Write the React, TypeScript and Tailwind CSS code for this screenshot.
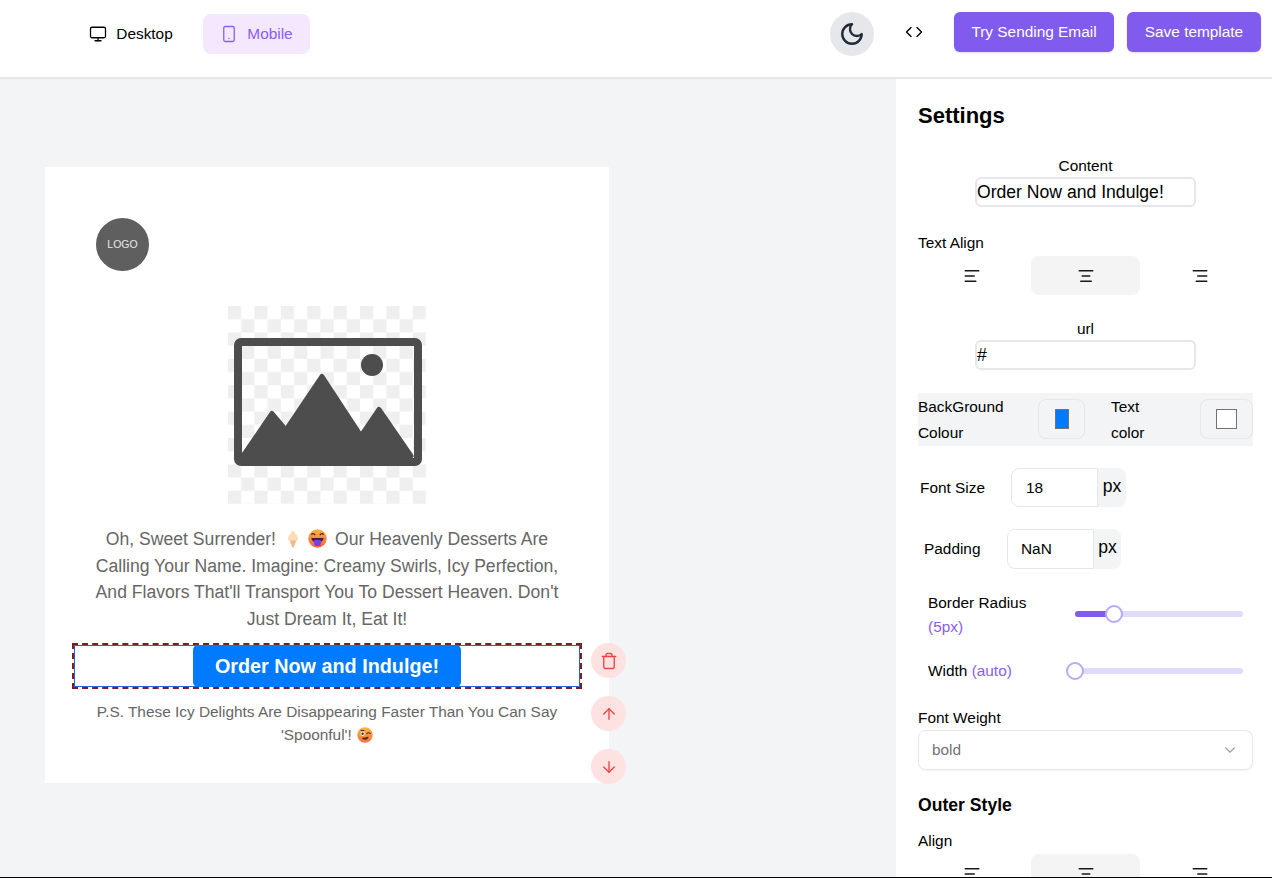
import {
  AlignCenter,
  AlignLeft,
  AlignRight,
  ArrowDown,
  ArrowUp,
  ChevronDown,
  Code,
  Monitor,
  Smartphone,
  Trash,
} from "lucide-react";

function IceCream() {
  return (
    <svg viewBox="0 0 12 18" className="ml-[11px] mr-[9px] inline-block h-[18px] w-[12px] align-[-3px]">
      <path d="M2 9 L10 9 L6.8 17.2 Q6 18 5.2 17.2 Z" fill="#f2b98c" />
      <path d="M6 0.5 Q8 2 8.5 4 Q10.5 5 10.8 7.5 Q12 9.5 10 10.5 L2 10.5 Q0 9.5 1.2 7.5 Q1.5 5 3.5 4 Q4 2 6 0.5 Z" fill="#fcdcb4" />
    </svg>
  );
}

function TongueFace() {
  return (
    <svg viewBox="0 0 20 20" className="mr-[8px] inline-block h-[19px] w-[19px] align-[-3px]">
      <defs>
        <linearGradient id="tongueFace" x1="0" y1="0" x2="0" y2="1">
          <stop offset="0" stopColor="#fbb23f" />
          <stop offset="1" stopColor="#f4624f" />
        </linearGradient>
      </defs>
      <circle cx="10" cy="10" r="9.7" fill="url(#tongueFace)" />
      <path d="M3.5 6 Q5.5 3.5 7.5 6.5 M12.5 6.5 Q14.5 3.5 16.5 6" fill="none" stroke="#4a2b1a" strokeWidth="1.3" />
      <path d="M3.5 9.5 H16.5 Q16 14 10 14.5 Q4 14 3.5 9.5 Z" fill="#43203a" />
      <path d="M6.5 11.5 H13.5 V15 Q13.5 18 10 18 Q6.5 18 6.5 15 Z" fill="#7a3fd6" />
    </svg>
  );
}

function WinkFace() {
  return (
    <svg viewBox="0 0 20 20" className="ml-[1px] inline-block h-[16px] w-[16px] align-[-3px]">
      <defs>
        <linearGradient id="winkFace" x1="0" y1="0" x2="0" y2="1">
          <stop offset="0" stopColor="#fcb83f" />
          <stop offset="1" stopColor="#f2704a" />
        </linearGradient>
      </defs>
      <circle cx="10" cy="10" r="9.7" fill="url(#winkFace)" />
      <circle cx="7" cy="8.5" r="2.6" fill="#fff" />
      <circle cx="7" cy="8.5" r="1.5" fill="#3b2a1e" />
      <path d="M12 8.5 Q14.5 6 17 8.5 M4.5 4 L9 4.5" fill="none" stroke="#4a2b1a" strokeWidth="1.3" />
      <path d="M6 13.5 Q10 13.5 14.5 12 Q13.5 16.5 9.5 16 Q7 15.8 6 13.5 Z" fill="#5b2a1e" />
    </svg>
  );
}

function ImagePlaceholder() {
  return (
    <svg viewBox="0 0 198 198" className="h-[198px] w-[198px]">
      <defs>
        <pattern id="checker" width="26.4" height="26.4" patternUnits="userSpaceOnUse">
          <rect width="13.2" height="13.2" fill="#efefef" />
          <rect x="13.2" y="13.2" width="13.2" height="13.2" fill="#efefef" />
        </pattern>
      </defs>
      <rect width="198" height="198" fill="url(#checker)" />
      <rect x="10" y="36" width="180" height="120" rx="3" fill="none" stroke="#4d4d4d" strokeWidth="8" />
      <circle cx="144" cy="59" r="11" fill="#4d4d4d" />
      <path
        d="M15 150 L44 107.5 L58 124 L94 70.5 L133 130 L151 103.5 L183 150 Z"
        fill="#4d4d4d"
        stroke="#4d4d4d"
        strokeWidth="5"
        strokeLinejoin="round"
      />
    </svg>
  );
}

function AlignTabs() {
  return (
    <div className="grid grid-cols-[107px_109px_107px] gap-[6px]">
      <div className="flex h-[39px] items-center justify-center">
        <AlignLeft size={18} strokeWidth={2} className="text-[#18181b]" />
      </div>
      <div className="flex h-[39px] items-center justify-center rounded-lg bg-[#f4f4f5]">
        <AlignCenter size={18} strokeWidth={2} className="text-[#18181b]" />
      </div>
      <div className="flex h-[39px] items-center justify-center">
        <AlignRight size={18} strokeWidth={2} className="text-[#18181b]" />
      </div>
    </div>
  );
}

function TextField({ label, value }: { label: string; value: string }) {
  return (
    <div className="flex flex-col items-center">
      <span className="mb-[1px] text-[15.4px] leading-[20px]">{label}</span>
      <input
        readOnly
        value={value}
        className="h-[30px] w-[221px] rounded-md border-2 border-[#e5e7eb] bg-white px-0 text-[17.6px] text-black outline-none"
      />
    </div>
  );
}

function NumberField({ label, value, labelClass, inputClass, addonClass }: { label: string; value: string; labelClass: string; inputClass: string; addonClass: string }) {
  return (
    <div className="flex items-center">
      <span className={labelClass}>{label}</span>
      <div className={inputClass}>{value}</div>
      <div className={addonClass}>px</div>
    </div>
  );
}

export default function App() {
  return (
    <div className="flex h-screen flex-col overflow-hidden border-b border-black bg-white font-['Liberation_Sans',Arial,sans-serif] text-black">
      <header className="flex h-[79px] shrink-0 items-start border-b-2 border-[#e5e7eb] bg-white">
        <div className="ml-[76px] mt-[14px] flex h-[40px] w-[110px] items-center justify-center gap-[9px] rounded-lg text-[15.4px]">
          <Monitor size={18} strokeWidth={1.7} />
          Desktop
        </div>
        <div className="ml-[17px] mt-[14px] flex h-[40px] w-[107px] items-center justify-center gap-[9px] rounded-lg bg-[#f3e8ff] text-[15.4px] text-[#8b5cf6]">
          <Smartphone size={18} strokeWidth={1.7} />
          Mobile
        </div>
        <div className="ml-[520px] mt-[12px] flex h-[44px] w-[44px] items-center justify-center rounded-full bg-[#e5e7eb]">
          <svg viewBox="0 0 24 24" className="h-[26px] w-[26px]" fill="none" stroke="#1f2937" strokeWidth="2.2" strokeLinecap="round" strokeLinejoin="round">
            <path d="M12 3a6 6 0 0 0 9 9 9 9 0 1 1-9-9Z" />
          </svg>
        </div>
        <div className="ml-[31px] mt-[23px]">
          <Code size={18} strokeWidth={1.8} />
        </div>
        <button className="ml-[31px] mt-[12px] h-[40px] w-[160px] rounded-md bg-[#805bee] text-[15.4px] text-white shadow-sm">
          Try Sending Email
        </button>
        <button className="ml-[13px] mt-[12px] h-[40px] w-[134px] rounded-md bg-[#805bee] text-[15.4px] text-white shadow-sm">
          Save template
        </button>
      </header>

      <div className="flex min-h-0 flex-1">
        <main className="w-[896px] shrink-0 bg-[#f3f4f6] pl-[45px] pt-[88px]">
          <div className="h-[616px] w-[564px] bg-white pt-[51px]">
            <div className="ml-[51px] flex h-[53px] w-[53px] items-center justify-center rounded-full bg-[#5f5f5f] text-[10.5px] text-[#e8e8e8]">
              LOGO
            </div>
            <div className="mt-[35px] flex justify-center">
              <ImagePlaceholder />
            </div>
            <p className="mx-auto mt-[22px] w-[480px] text-center text-[17.6px] leading-[26.6px] text-[#666666]">
              Oh, Sweet Surrender!
              <IceCream />
              <TongueFace />
              Our Heavenly Desserts Are Calling Your Name. Imagine: Creamy Swirls, Icy Perfection, And Flavors That'll
              Transport You To Dessert Heaven. Don't Just Dream It, Eat It!
            </p>
            <div className="relative ml-[27px] mt-[11px] w-[510px]">
              <div className="border-2 border-dashed border-[#7f1d1d]">
                <div className="flex h-[42px] justify-center ring-1 ring-inset ring-[#2563eb]">
                  <button className="w-[268px] rounded-[5px] bg-[#007bff] text-[19.8px] font-bold text-white">
                    Order Now and Indulge!
                  </button>
                </div>
              </div>
              <div className="absolute left-[519px] top-0 flex flex-col gap-[18px]">
                <div className="flex h-[35px] w-[35px] items-center justify-center rounded-full bg-[#fee2e2] text-[#ef4444]">
                  <Trash size={18} strokeWidth={1.8} />
                </div>
                <div className="flex h-[35px] w-[35px] items-center justify-center rounded-full bg-[#fee2e2] text-[#ef4444]">
                  <ArrowUp size={18} strokeWidth={1.8} />
                </div>
                <div className="flex h-[35px] w-[35px] items-center justify-center rounded-full bg-[#fee2e2] text-[#ef4444]">
                  <ArrowDown size={18} strokeWidth={1.8} />
                </div>
              </div>
            </div>
            <p className="mx-auto mt-[11px] w-[480px] text-center text-[15.4px] leading-[23.1px] text-[#666666]">
              P.S. These Icy Delights Are Disappearing Faster Than You Can Say 'Spoonful'! <WinkFace />
            </p>
          </div>
        </main>

        <aside className="w-[376px] overflow-hidden bg-white pl-[22px] pr-[19px] pt-[23px]">
          <h2 className="text-[22px] font-bold leading-[28px]">Settings</h2>

          <div className="mt-[26px]">
            <TextField label="Content" value="Order Now and Indulge!" />
          </div>

          <div className="mt-[25px] text-[15.4px] leading-[22px]">Text Align</div>
          <div className="mt-[2px]">
            <AlignTabs />
          </div>

          <div className="mt-[24px]">
            <TextField label="url" value="#" />
          </div>

          <div className="mt-[23px] flex h-[53px] items-start bg-[#f3f4f6] text-[15.4px] leading-[26px]">
            <span className="w-[120px] pt-[1px]">BackGround Colour</span>
            <div className="mt-[6px] flex h-[40px] w-[47px] items-center justify-center rounded-lg border border-[#e5e7eb]">
              <div className="h-[20px] w-[14px] border border-[#71717a] bg-[#007bff]" />
            </div>
            <span className="ml-[26px] mr-[39px] w-[50px] pt-[1px]">Text color</span>
            <div className="mt-[6px] flex h-[40px] w-[53px] items-center justify-center rounded-lg border border-[#e5e7eb]">
              <div className="h-[20px] w-[21px] border border-[#71717a] bg-white" />
            </div>
          </div>

          <div className="mt-[22px]">
            <NumberField
              label="Font Size"
              value="18"
              labelClass="ml-[2px] w-[91px] text-[15.4px]"
              inputClass="flex h-[39px] w-[87px] items-center rounded-l-lg border border-[#e5e7eb] pl-[14px] text-[15.4px]"
              addonClass="flex h-[39px] w-[28px] items-start justify-center rounded-r-lg bg-[#f3f4f6] pt-[5px] text-[17.6px]"
            />
          </div>
          <div className="mt-[22px]">
            <NumberField
              label="Padding"
              value="NaN"
              labelClass="ml-[6px] w-[83px] text-[15.4px]"
              inputClass="flex h-[40px] w-[87px] items-center rounded-l-lg border border-[#e5e7eb] pl-[13px] text-[15.4px]"
              addonClass="flex h-[40px] w-[27px] items-start justify-center rounded-r-lg bg-[#f3f4f6] pt-[5px] text-[17.6px]"
            />
          </div>

          <div className="ml-[10px] mt-[22px] flex h-[46px] items-start">
            <div className="w-[147px] text-[15.4px] leading-[23.5px]">
              Border Radius
              <br />
              <span className="text-[#8b5cf6]">(5px)</span>
            </div>
            <div className="relative mt-[20px] h-[6px] w-[168px] rounded-full bg-[#e0dafb]">
              <div className="h-[6px] w-[39px] rounded-l-full bg-[#805bee]" />
              <div className="absolute left-[30px] top-[-6px] h-[18px] w-[18px] rounded-full border-2 border-[#bba8f6] bg-white" />
            </div>
          </div>

          <div className="ml-[10px] mt-[22px] flex h-[24px] items-center">
            <div className="w-[147px] text-[15.4px]">
              Width <span className="text-[#8b5cf6]">(auto)</span>
            </div>
            <div className="relative h-[6px] w-[168px] rounded-full bg-[#e0dafb]">
              <div className="absolute left-[-9px] top-[-6px] h-[18px] w-[18px] rounded-full border-2 border-[#bba8f6] bg-white" />
            </div>
          </div>

          <div className="mt-[24px] text-[15.4px] leading-[22px]">Font Weight</div>
          <div className="mt-[1px] flex h-[40px] items-center justify-between rounded-lg border border-[#e5e7eb] pl-[13px] pr-[13px] text-[15.4px] text-[#71717a] shadow-xs">
            bold
            <ChevronDown size={18} strokeWidth={1.5} className="text-[#a1a1aa]" />
          </div>

          <h3 className="mt-[23px] text-[17.6px] font-bold leading-[24px]">Outer Style</h3>
          <div className="mt-[13px] text-[15.4px] leading-[22px]">Align</div>
          <div className="mt-[2px]">
            <AlignTabs />
          </div>
        </aside>
      </div>
    </div>
  );
}
